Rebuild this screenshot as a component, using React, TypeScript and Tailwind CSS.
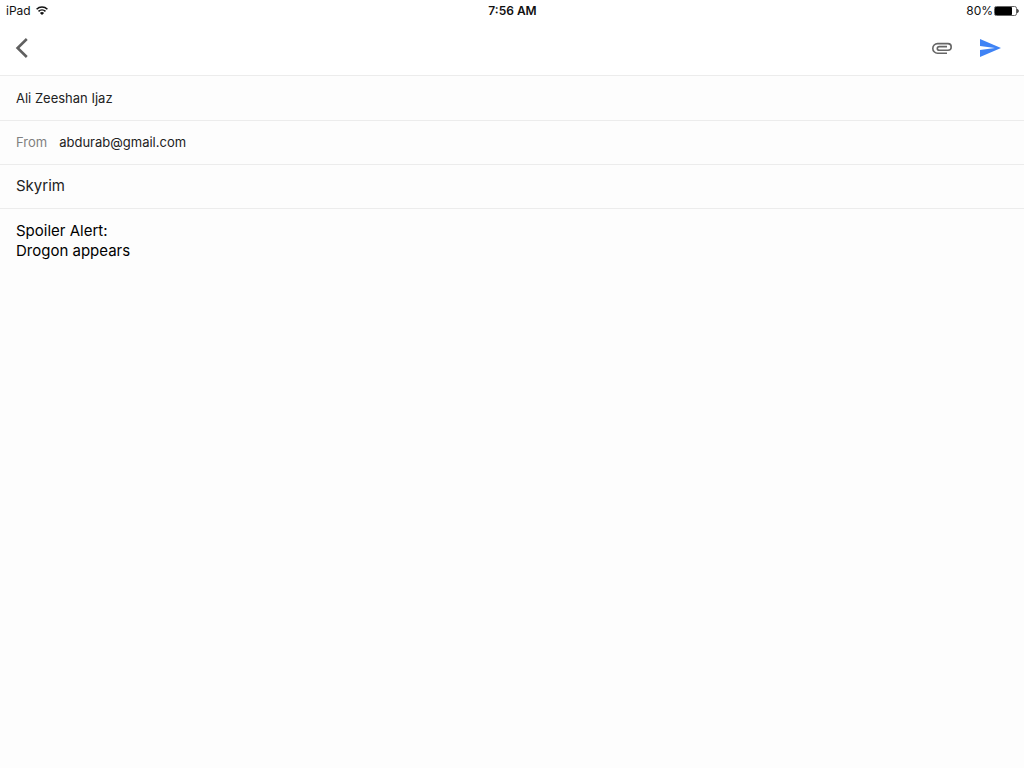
import React, { useState } from 'react';
import { MdSend } from 'react-icons/md';

const WifiIcon: React.FC = () => (
  <svg width="12" height="9" viewBox="0 0 12 9" fill="none" stroke="#111" strokeWidth="1.5" aria-hidden="true">
    <path d="M0.6 3.3C3.6 0.3 8.4 0.3 11.4 3.3" />
    <path d="M2.5 5.4C4.5 3.5 7.5 3.5 9.5 5.4" />
    <path d="M6 9L3.9 6.9C5.1 5.8 6.9 5.8 8.1 6.9Z" fill="#111" stroke="none" />
  </svg>
);

const BatteryIcon: React.FC = () => (
  <svg width="25" height="10" viewBox="0 0 25 10" aria-hidden="true">
    <rect x="0.5" y="0.5" width="22" height="9" rx="1.8" fill="none" stroke="#666" />
    <rect x="1" y="1" width="17" height="8" rx="0.8" fill="#000" />
    <path d="M23.2 2.8C25.2 3.6 25.2 6.4 23.2 7.2Z" fill="#222" />
  </svg>
);

const PaperclipIcon: React.FC = () => (
  <svg width="24" height="24" viewBox="0 0 24 24" fill="none" stroke="#666" strokeWidth="1.6" aria-hidden="true">
    <path d="M17 17.2H7.6C4.9 17.2 2.8 15 2.8 12.4S4.9 7.6 7.6 7.6H18C19.8 7.6 21.2 9.1 21.2 10.9S19.8 14.2 18 14.2H9.4C8.2 14.2 7.3 13.4 7.3 12.4S8.2 10.6 9.4 10.6H17" />
  </svg>
);

const StatusBar: React.FC = () => (
  <div className="grid h-5 grid-cols-3 items-center pl-1.5 pr-[5px] pt-px text-[12px] leading-4 text-[#111]">
    <div className="flex items-center gap-[5px]">
      <span>iPad</span>
      <WifiIcon />
    </div>
    <span className="text-center font-semibold">7:56 AM</span>
    <div className="flex items-center justify-end gap-px">
      <span>80%</span>
      <BatteryIcon />
    </div>
  </div>
);

export default function App() {
  const [to, setTo] = useState('Ali Zeeshan Ijaz');
  const [from, setFrom] = useState('abdurab@gmail.com');
  const [subject, setSubject] = useState('Skyrim');
  const [body, setBody] = useState('Spoiler Alert:\nDrogon appears');

  return (
    <div className="flex min-h-screen flex-col bg-[#fdfdfd] font-[Inter,sans-serif] text-[#222]">
      <header className="border-b border-[#ececec] bg-white">
        <StatusBar />
        <div className="flex h-[55px] items-center justify-between pl-3.5 pr-[22px]">
          <button type="button" aria-label="Back" className="pt-px">
            <svg width="16" height="22" viewBox="0 0 16 22" fill="none" stroke="#606060" strokeWidth="2.6">
              <path d="M12.8 2L3.6 11L12.8 20" />
            </svg>
          </button>
          <div className="flex items-center gap-6 pt-px">
            <button type="button" aria-label="Attach file">
              <PaperclipIcon />
            </button>
            <button type="button" aria-label="Send">
              <MdSend className="h-6 w-6 text-[#3f83f5]" />
            </button>
          </div>
        </div>
      </header>

      <form className="flex flex-1 flex-col">
        <div className="flex h-[45px] items-center border-b border-[#ececec] px-4">
          <input
            aria-label="To"
            value={to}
            onChange={(e) => setTo(e.target.value)}
            className="w-full text-[13px] leading-5 outline-none"
          />
        </div>
        <div className="flex h-11 items-center gap-3 border-b border-[#ececec] px-4 pb-px text-[13px] leading-5">
          <label htmlFor="from" className="text-[#808080]">
            From
          </label>
          <input
            id="from"
            value={from}
            onChange={(e) => setFrom(e.target.value)}
            className="flex-1 outline-none"
          />
        </div>
        <div className="flex h-11 items-center border-b border-[#ececec] px-4 pb-px">
          <input
            aria-label="Subject"
            value={subject}
            onChange={(e) => setSubject(e.target.value)}
            className="w-full text-[15px] leading-5 outline-none"
          />
        </div>
        <textarea
          aria-label="Message"
          value={body}
          onChange={(e) => setBody(e.target.value)}
          className="w-full flex-1 resize-none px-4 py-3 text-[15px] leading-5 text-black outline-none"
        />
      </form>
    </div>
  );
}
